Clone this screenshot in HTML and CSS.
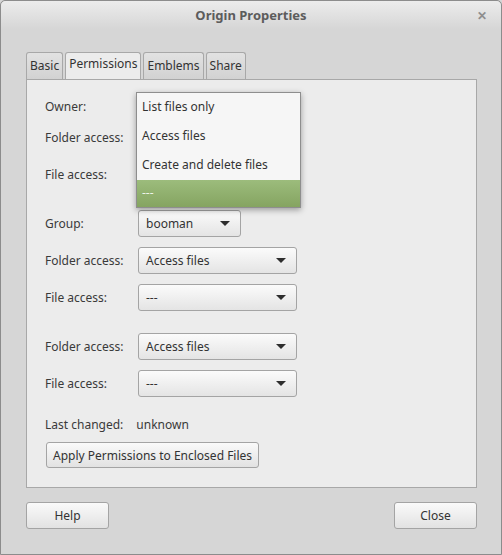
FILE: index.html
```html
<!DOCTYPE html>
<html lang="en">
<head>
    <meta charset="UTF-8">
    <title>Origin Properties</title>
    <link rel="stylesheet" href="styles.css">
</head>
<body>

    <div class="window">
        <div class="titlebar">
            <span class="title">Origin Properties</span>
            <span class="close-x">&#x2715;</span>
        </div>

        <div class="content">
            <div class="tabs">
                <div class="tab">Basic</div>
                <div class="tab active">Permissions</div>
                <div class="tab">Emblems</div>
                <div class="tab">Share</div>
            </div>

            <div class="panel">
                <!-- Owner (combos sit under the open popup) -->
                <div class="group first">
                    <div class="row tight">
                        <span class="label">Owner:</span>
                        <div class="combo wide"></div>
                    </div>
                    <div class="row">
                        <span class="label">Folder access:</span>
                        <div class="combo wide"></div>
                    </div>
                    <div class="row">
                        <span class="label">File access:</span>
                        <div class="combo wide"></div>
                    </div>
                </div>

                <!-- Group -->
                <div class="group">
                    <div class="row">
                        <span class="label">Group:</span>
                        <div class="combo small">
                            <span>booman</span>
                            <span class="arrow"></span>
                        </div>
                    </div>
                    <div class="row">
                        <span class="label">Folder access:</span>
                        <div class="combo wide">
                            <span>Access files</span>
                            <span class="arrow"></span>
                        </div>
                    </div>
                    <div class="row">
                        <span class="label">File access:</span>
                        <div class="combo wide">
                            <span>---</span>
                            <span class="arrow"></span>
                        </div>
                    </div>
                </div>

                <!-- Others -->
                <div class="group">
                    <div class="row">
                        <span class="label">Folder access:</span>
                        <div class="combo wide">
                            <span>Access files</span>
                            <span class="arrow"></span>
                        </div>
                    </div>
                    <div class="row">
                        <span class="label">File access:</span>
                        <div class="combo wide">
                            <span>---</span>
                            <span class="arrow"></span>
                        </div>
                    </div>
                </div>

                <div class="last-changed">
                    <span>Last changed:</span>
                    <span>unknown</span>
                </div>
                <button class="btn apply">Apply Permissions to Enclosed Files</button>

                <!-- open dropdown of owner folder access -->
                <ul class="popup">
                    <li>List files only</li>
                    <li>Access files</li>
                    <li>Create and delete files</li>
                    <li class="selected">---</li>
                </ul>
            </div>

            <div class="actions">
                <button class="btn">Help</button>
                <button class="btn">Close</button>
            </div>
        </div>
    </div>

</body>
</html>
```

FILE: styles.css
```css
body {
    margin: 0;
    font-family: "Noto Sans", sans-serif;
    font-size: 12px;
    color: #3a3a3a;
    background: #d6d6d6;
}
.window {
    box-sizing: border-box;
    width: 502px;
    height: 555px;
    border: 1px solid #8c8c8c;
    border-radius: 5px 5px 0 0;
    background: #d6d6d6;
}
.titlebar {
    position: relative;
    height: 28px;
    display: flex;
    align-items: center;
    justify-content: center;
    background: linear-gradient(#ececec, #d6d6d6);
    border-radius: 5px 5px 0 0;
}
.title {
    font-weight: bold;
    font-size: 13px;
    color: #5c5c5c;
}
.close-x {
    position: absolute;
    right: 14px;
    top: 6px;
    font-size: 12px;
    font-weight: bold;
    color: #8e8e8e;
}
.content {
    padding: 22px 24px 0 25px;
}
.tabs {
    display: flex;
    align-items: flex-end;
    gap: 2px;
    height: 28px;
}
.tab {
    box-sizing: border-box;
    height: 27px;
    padding: 4px 3px 0;
    background: linear-gradient(#e2e2e2, #d2d2d2);
    border: 1px solid #a8a8a8;
    border-bottom: none;
    border-radius: 3px 3px 0 0;
    color: #333;
    font-size: 12px;
}
.tab.active {
    height: 28px;
    padding: 2px 3px 0;
    background: #ececec;
    position: relative;
    top: 1px;
}
.panel {
    position: relative;
    box-sizing: border-box;
    height: 409px;
    padding: 13px 0 0 18px;
    background: #ececec;
    border: 1px solid #a8a8a8;
}
.group {
    display: flex;
    flex-direction: column;
    gap: 10px;
    margin-top: 22px;
}
.group.first {
    margin-top: 0;
    gap: 4px;
}
.group.first .row + .row + .row {
    margin-top: 6px;
}
.row {
    display: flex;
    align-items: center;
    height: 27px;
}
.label {
    width: 93px;
    font-size: 12px;
    color: #3a3a3a;
}
.combo {
    box-sizing: border-box;
    height: 27px;
    display: flex;
    align-items: center;
    justify-content: space-between;
    padding: 0 10px 0 7px;
    border: 1px solid #a4a4a4;
    border-radius: 3px;
    background: linear-gradient(#fbfbfb, #e4e4e4);
    font-size: 12px;
    color: #333;
}
.combo.wide {
    width: 159px;
}
.combo.small {
    width: 103px;
}
.arrow {
    width: 0;
    height: 0;
    border-left: 5px solid transparent;
    border-right: 5px solid transparent;
    border-top: 5px solid #2e2e2e;
}
.last-changed {
    margin-top: 19px;
    display: flex;
    gap: 13px;
    font-size: 12px;
    line-height: 18px;
}
.btn {
    height: 27px;
    padding: 0 8px;
    border: 1px solid #a4a4a4;
    border-radius: 3px;
    background: linear-gradient(#fafafa, #e2e2e2);
    font-family: "Noto Sans", sans-serif;
    font-size: 12px;
    color: #333;
}
.apply {
    margin-top: 8px;
    margin-left: 1px;
    height: 26px;
    padding: 0 6px;
}
.popup {
    position: absolute;
    left: 109px;
    top: 12px;
    width: 165px;
    margin: 0;
    padding: 0;
    list-style: none;
    box-sizing: border-box;
    background: #f6f6f6;
    border: 1px solid #8e8e8e;
    box-shadow: 0 2px 6px rgba(0, 0, 0, 0.35);
}
.popup li {
    height: 29px;
    line-height: 28px;
    padding-left: 5px;
    font-size: 12px;
    color: #333;
}
.popup li.selected {
    height: 27px;
    line-height: 26px;
    background: linear-gradient(#9cbc7c, #85a461);
    color: #eef4e8;
}
.actions {
    display: flex;
    justify-content: space-between;
    margin-top: 14px;
}
.actions .btn {
    width: 83px;
}
```
